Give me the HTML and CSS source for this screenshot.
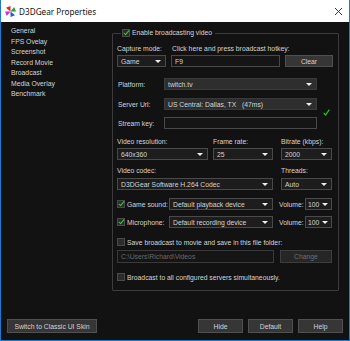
FILE: index.html
```html
<!DOCTYPE html>
<html>

<head>
  <title>D3DGear Properties</title>
  <link rel="stylesheet" href="styles.css">
</head>

<body>
  <div class="window">
    <div class="titlebar">
      <svg class="app-icon" width="11" height="11" viewBox="0 0 12 12">
        <polygon points="6,6 6,0 1,2" fill="#e8202a" />
        <polygon points="6,6 12,6 10,1" fill="#2aa02a" />
        <polygon points="6,6 6,12 11,10" fill="#1c5fd8" />
        <polygon points="6,6 0,6 2,11" fill="#d42bd0" />
      </svg>
      <span class="title">D3DGear Properties</span>
      <svg class="close" width="9" height="9" viewBox="0 0 9 9">
        <path d="M1 1 L8 8 M8 1 L1 8" stroke="#222" stroke-width="0.9" />
      </svg>
    </div>

    <div class="main">
      <ul class="nav">
        <li>General</li>
        <li>FPS Ovelay</li>
        <li>Screenshot</li>
        <li>Record Movie</li>
        <li>Broadcast</li>
        <li>Media Overlay</li>
        <li>Benchmark</li>
      </ul>

      <fieldset class="group">
        <legend><span class="check on"></span>Enable broadcasting video</legend>

        <div class="row labels r-capture">
          <span class="w-capture">Capture mode:</span>
          <span>Click here and press broadcast hotkey:</span>
        </div>
        <div class="row r-ctrl">
          <div class="combo w-game">Game</div>
          <div class="field w-hotkey">F9</div>
          <div class="btn w-clear">Clear</div>
        </div>

        <div class="row r-platform">
          <span class="lbl">Platform:</span>
          <div class="combo light w-wide">twitch.tv</div>
        </div>
        <div class="row r-server">
          <span class="lbl">Server Url:</span>
          <div class="combo light w-wide">US Central: Dallas, TX &nbsp;&nbsp;(47ms)</div>
          <svg class="ok" width="7" height="7" viewBox="0 0 7 7">
            <path d="M0.8 4 L2.6 6 L6.3 0.6" stroke="#26c626" stroke-width="1.2" fill="none" />
          </svg>
        </div>
        <div class="row r-key">
          <span class="lbl">Stream key:</span>
          <div class="field w-wide"></div>
        </div>

        <div class="row labels r-vlabels">
          <span class="w-res">Video resolution:</span>
          <span class="w-fps">Frame rate:</span>
          <span>Bitrate (kbps):</span>
        </div>
        <div class="row r-ctrl2">
          <div class="combo w-res">640x360</div>
          <div class="combo w-fps">25</div>
          <div class="combo w-bit">2000</div>
        </div>

        <div class="row labels r-clabels">
          <span class="w-codec">Video codec:</span>
          <span>Threads:</span>
        </div>
        <div class="row r-ctrl3">
          <div class="combo w-codec">D3DGear Software H.264 Codec</div>
          <div class="combo w-bit">Auto</div>
        </div>

        <div class="row r-sound">
          <span class="check on"></span>
          <span class="clbl">Game sound:</span>
          <div class="combo w-dev">Default playback device</div>
          <span class="vol">Volume:</span>
          <div class="combo w-vol">100</div>
        </div>
        <div class="row r-mic">
          <span class="check on"></span>
          <span class="clbl">Microphone:</span>
          <div class="combo w-dev">Default recording device</div>
          <span class="vol">Volume:</span>
          <div class="combo w-vol">100</div>
        </div>

        <div class="row r-save">
          <span class="check"></span>
          <span>Save broadcast to movie and save in this file folder:</span>
        </div>
        <div class="row r-path">
          <div class="field disabled w-path">C:\Users\Richard\Videos</div>
          <div class="btn disabled w-change">Change</div>
        </div>

        <div class="row r-all">
          <span class="check"></span>
          <span>Broadcast to all configured servers simultaneously.</span>
        </div>
      </fieldset>
    </div>

    <div class="footer">
      <div class="btn w-skin">Switch to Classic UI Skin</div>
      <div class="spacer"></div>
      <div class="btn w-foot">Hide</div>
      <div class="btn w-foot">Default</div>
      <div class="btn w-foot">Help</div>
    </div>
  </div>
</body>

</html>
```

FILE: styles.css
```css
html,
body {
  margin: 0;
  padding: 0;
  background: #111;
}

.window {
  width: 350px;
  height: 341px;
  box-sizing: border-box;
  border: 1px solid #1a7ad0;
  border-top: none;
  background-color: #121212;
  color: #d4d4d4;
  font-family: "Liberation Sans", Arial, sans-serif;
  font-size: 6.8px;
  display: flex;
  flex-direction: column;
}

.titlebar {
  height: 22px;
  background: #fff;
  display: flex;
  align-items: center;
  padding-left: 4px;
  color: #111;
  flex-shrink: 0;
}

.app-icon {
  margin-right: 3px;
}

.title {
  font-family: "Noto Sans", sans-serif;
  font-size: 8.2px;
  flex: 1;
}

.close {
  margin-right: 6px;
}

.main {
  display: flex;
  height: 270px;
}

.nav {
  list-style: none;
  margin: 0;
  padding: 4px 0 0 10px;
  width: 101px;
}

.nav li {
  height: 10.5px;
  line-height: 10.5px;
}

/* group box */
.group {
  margin: 6px 0 0 0;
  padding: 0 5px 0 4px;
  width: 226px;
  height: 263px;
  box-sizing: border-box;
  border: 1px solid #3c3c3c;
  border-radius: 1px;
}

.group legend {
  padding: 0 3px 0 1px;
  margin-left: 4px;
  display: flex;
  align-items: center;
  height: 10px;
  line-height: 10px;
}

.row {
  display: flex;
  align-items: center;
  height: 12px;
  white-space: nowrap;
}

.labels {
  height: 10px;
}

.r-capture { margin-top: 5px; }
.r-ctrl { margin-top: 2px; }
.r-platform { margin-top: 11px; }
.r-server { margin-top: 8px; }
.r-key { margin-top: 7px; }
.r-vlabels { margin-top: 7px; }
.r-ctrl2 { margin-top: 2px; }
.r-clabels { margin-top: 5px; }
.r-ctrl3 { margin-top: 3px; }
.r-sound { margin-top: 8px; }
.r-mic { margin-top: 6px; }
.r-save { margin-top: 8px; }
.r-path { margin-top: 2px; height: 13px; }
.r-all { margin-top: 8px; }

.lbl {
  width: 46px;
  padding-left: 1px;
}

.clbl {
  width: 42px;
}

.vol {
  margin-left: 6px;
  width: 26px;
}

/* controls */
.combo,
.field,
.btn {
  height: 100%;
  box-sizing: border-box;
  border: 1px solid #4a4a4a;
  display: flex;
  align-items: center;
  padding-left: 3px;
  white-space: nowrap;
  overflow: hidden;
}

.combo {
  background: #1d1d1d;
  position: relative;
  padding-right: 10px;
}

.combo.light {
  background: #2e2e2e;
  border-color: #3a3a3a;
}

.combo::after {
  content: "";
  position: absolute;
  right: 4px;
  top: 50%;
  margin-top: -1px;
  border-left: 3px solid transparent;
  border-right: 3px solid transparent;
  border-top: 3px solid #eee;
}

.field {
  background: #151515;
  border-color: #484848;
}

.field.disabled {
  color: #6a6a6a;
  border-color: #3a3a3a;
}

.btn {
  background: #363636;
  border-color: #505050;
  justify-content: center;
  padding-left: 0;
}

.btn.disabled {
  background: #262626;
  border-color: #3e3e3e;
  color: #6e6e6e;
}

.check {
  width: 8px;
  height: 8px;
  box-sizing: border-box;
  border: 1px solid #4a4a4a;
  background: #2c2c2c;
  margin-right: 2px;
  position: relative;
  flex-shrink: 0;
}

.check.on::after {
  content: "";
  position: absolute;
  left: 2px;
  top: -1px;
  width: 2px;
  height: 5px;
  border: solid #2cd02c;
  border-width: 0 1.3px 1.3px 0;
  transform: rotate(40deg);
}

.ok {
  margin-left: 6px;
  align-self: flex-end;
  margin-bottom: -6px;
}

/* widths */
.w-capture { width: 55px; }
.w-game { width: 49px; margin-right: 5px; }
.w-hotkey { width: 109px; margin-right: 5px; }
.w-clear { width: 48px; }
.w-wide { width: 153px; }
.w-res { width: 91px; margin-right: 5px; }
.w-fps { width: 60px; margin-right: 8px; }
.w-bit { width: 51px; }
.w-codec { width: 156px; margin-right: 8px; }
.w-dev { width: 104px; }
.w-vol { width: 27px; padding-left: 2px; padding-right: 8px; }
.w-vol::after { right: 3px; }
.w-path { width: 157px; margin-right: 6px; }
.w-change { width: 52px; }

/* footer */
.footer {
  display: flex;
  align-items: center;
  height: 14px;
  margin-top: 27px;
  padding: 0 6px 0 6px;
}

.spacer {
  flex: 1;
}

.w-skin {
  width: 90px;
}

.w-foot {
  width: 45px;
  margin-left: 5px;
}
```
